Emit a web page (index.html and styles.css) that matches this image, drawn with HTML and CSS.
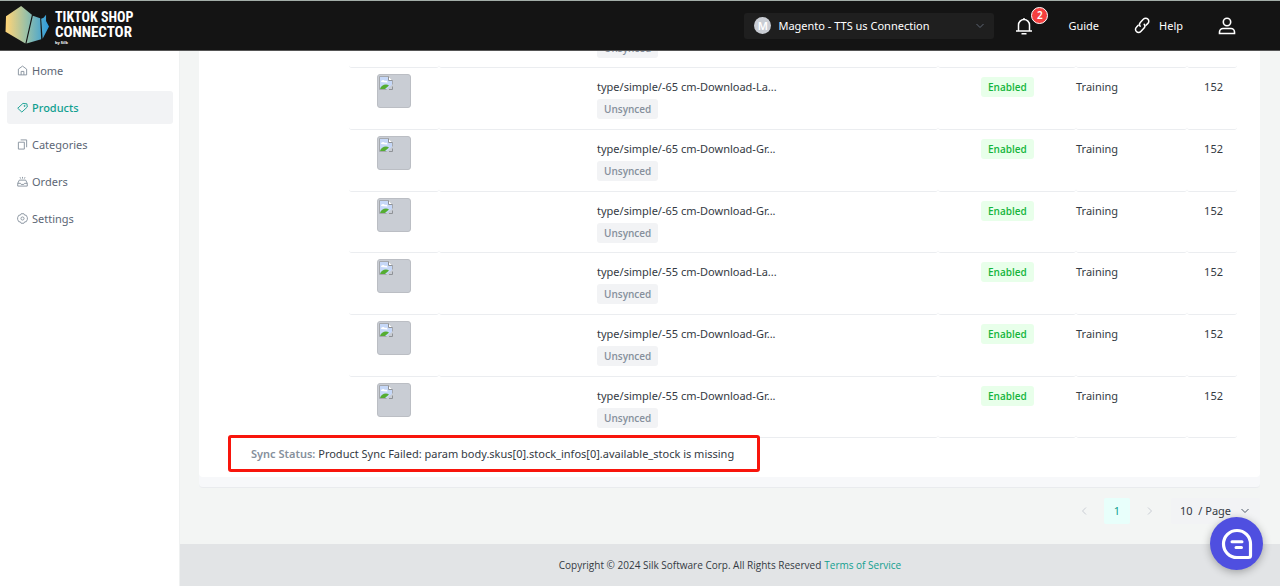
FILE: index.html
```html
<!DOCTYPE html>
<html lang="en">
<head>
<meta charset="utf-8">
<meta name="viewport" content="width=device-width, initial-scale=1">
<title>TikTok Shop Connector - Products</title>
<link rel="stylesheet" href="styles.css">
</head>
<body>
<svg class="defs" aria-hidden="true">
  <symbol id="broken" viewBox="0 0 14 14">
    <path d="M.5.5h9l4 4v9H.5z" fill="#c6d8f8" stroke="#a5a8ad"/>
    <path d="M9.500.5v4h4" fill="#fff" stroke="#8f9297"/>
    <path d="M2 6c0-2 2.500-3 4-1 1.500-.5 2.500.3 2.500 1.500z" fill="#fff"/>
    <path d="M1 13c1-4 6-5.500 9-3.500L6 13z" fill="#55ad32"/>
    <path d="M7 14l7-6v6z" fill="#c9cdd4"/>
    <path d="M10 13.500h3.500v-3" fill="none" stroke="#8f9297"/>
  </symbol>
</svg>

<header class="topbar">
  <a class="brand" href="#" aria-label="TikTok Shop Connector by Silk">
    <svg class="brand-mark" viewBox="0 0 46 42" aria-hidden="true">
      <defs><linearGradient id="silk" gradientUnits="userSpaceOnUse" x1="1" y1="20" x2="45" y2="20"><stop offset="0" stop-color="#ffd477"/><stop offset=".5" stop-color="#94bfa9"/><stop offset="1" stop-color="#2b9be0"/></linearGradient></defs>
      <path d="M16.500 1 1 11.500.5 27.500 20.800 39.500 27.500 10z" fill="url(#silk)"/>
      <path d="M28.500 11 36 13.500 37 35 22 39.500z" fill="url(#silk)"/>
      <path d="M37 14 39.500 13 42 10v6.500L45 22l-6.500 12.500z" fill="url(#silk)"/>
    </svg>
    <span class="brand-text"><span class="brand-line">TIKTOK SHOP</span><span class="brand-line brand-line-wide">CONNECTOR</span><small class="brand-by">by Silk</small></span>
  </a>
  <div class="tools">
    <div class="connection">
      <span class="avatar" aria-hidden="true">M</span>
      <select class="connection-select" aria-label="Connection"><option>Magento - TTS us Connection</option></select>
      <svg class="connection-arrow" viewBox="0 0 10 6" aria-hidden="true"><path d="m1.500 1 3.500 3.500L8.500 1" fill="none" stroke="#5d6573"/></svg>
    </div>
    <button class="bell" type="button" aria-label="Notifications">
      <svg width="18" height="18" viewBox="0 0 18 18" fill="none" stroke="#fff" stroke-width="1.500" aria-hidden="true"><path d="M3.500 14V8a5.500 5.500 0 0 1 11 0v6M1 14h16M9 2.500V1M6.500 16.700h5"/></svg>
      <span class="count">2</span>
    </button>
    <a class="tool guide" href="#">Guide</a>
    <a class="tool help" href="#"><svg width="17" height="17" viewBox="0 0 17 17" fill="none" stroke="#fff" stroke-width="1.500" stroke-linecap="round" aria-hidden="true"><path d="M6.200 9.200C5 7.800 5.200 6.600 6.300 5.400L9.500 2.100a3 3 0 0 1 4.400 0 3 3 0 0 1 0 4.300L12 8.300"/><path d="M10.200 7.200c1.200 1.400 1 2.600-.1 3.800l-3.300 3.500a3 3 0 0 1-4.400 0 3 3 0 0 1 0-4.300L4.200 8.300"/></svg>Help</a>
    <button class="user" type="button" aria-label="Account"><svg width="18" height="18" viewBox="0 0 18 18" fill="none" stroke="#fff" stroke-width="1.600" aria-hidden="true"><circle cx="9" cy="5" r="3.700"/><path d="M1.500 16.500v-1.500a3.500 3.500 0 0 1 3.500-3.500h8a3.500 3.500 0 0 1 3.500 3.500v1.500z"/></svg></button>
  </div>
</header>

<div class="shell">
  <nav class="sidebar" aria-label="Main">
    <a class="nav-item" href="#"><svg class="nav-icon" viewBox="0 0 12 12" aria-hidden="true"><path d="M1.500 4.500 6 1.200l4.500 3.300v6.300h-9zM4.500 10.800V7h3v3.800"/></svg>Home</a>
    <a class="nav-item active" href="#" aria-current="page"><svg class="nav-icon" viewBox="0 0 12 12" aria-hidden="true"><path d="M6.500 1.500 10.800 2 11.200 5.500 5.300 11 .8 6.800z"/><circle cx="8.300" cy="4.300" r=".6"/></svg>Products</a>
    <a class="nav-item" href="#"><svg class="nav-icon" viewBox="0 0 12 12" aria-hidden="true"><path d="M1.500 3.500h6.500v7.500H1.500zM4 1h6.500v8"/></svg>Categories</a>
    <a class="nav-item" href="#"><svg class="nav-icon" viewBox="0 0 12 12" aria-hidden="true"><path d="M.8 11V8l1.700-3.500h7L11.200 8v3zM.8 8h3l.8 1.200h2.800L8.200 8h3M6 1v1.800M3.300 1.300l.6 1.500M8.700 1.300l-.6 1.500"/></svg>Orders</a>
    <a class="nav-item" href="#"><svg class="nav-icon" viewBox="0 0 12 12" aria-hidden="true"><path d="M4.500.8h3l.8 1.500 1.800.2L11.300 5v2l-1.200 2.500-1.800.2-.8 1.500h-3l-.8-1.500-1.800-.2L.7 7V5l1.200-2.500 1.800-.2z"/><circle cx="6" cy="6" r="1.700"/></svg>Settings</a>
  </nav>

  <main class="content">
    <section class="card">
      <div class="card-body">
        <table class="variants" aria-label="Product variants">
          <tbody>
            <tr><td class="c-img"><svg class="thumb" role="img" aria-label="No image"><use href="#broken" x="1" y="1" width="14" height="14"/></svg></td><td class="c-name">type/simple/-65 cm-Download-La...<span class="tag unsynced">Unsynced</span></td><td class="c-state"><span class="tag enabled">Enabled</span></td><td class="c-cat">Training</td><td class="c-qty">152</td></tr>
            <tr><td class="c-img"><svg class="thumb" role="img" aria-label="No image"><use href="#broken" x="1" y="1" width="14" height="14"/></svg></td><td class="c-name">type/simple/-65 cm-Download-La...<span class="tag unsynced">Unsynced</span></td><td class="c-state"><span class="tag enabled">Enabled</span></td><td class="c-cat">Training</td><td class="c-qty">152</td></tr>
            <tr><td class="c-img"><svg class="thumb" role="img" aria-label="No image"><use href="#broken" x="1" y="1" width="14" height="14"/></svg></td><td class="c-name">type/simple/-65 cm-Download-Gr...<span class="tag unsynced">Unsynced</span></td><td class="c-state"><span class="tag enabled">Enabled</span></td><td class="c-cat">Training</td><td class="c-qty">152</td></tr>
            <tr><td class="c-img"><svg class="thumb" role="img" aria-label="No image"><use href="#broken" x="1" y="1" width="14" height="14"/></svg></td><td class="c-name">type/simple/-65 cm-Download-Gr...<span class="tag unsynced">Unsynced</span></td><td class="c-state"><span class="tag enabled">Enabled</span></td><td class="c-cat">Training</td><td class="c-qty">152</td></tr>
            <tr><td class="c-img"><svg class="thumb" role="img" aria-label="No image"><use href="#broken" x="1" y="1" width="14" height="14"/></svg></td><td class="c-name">type/simple/-55 cm-Download-La...<span class="tag unsynced">Unsynced</span></td><td class="c-state"><span class="tag enabled">Enabled</span></td><td class="c-cat">Training</td><td class="c-qty">152</td></tr>
            <tr><td class="c-img"><svg class="thumb" role="img" aria-label="No image"><use href="#broken" x="1" y="1" width="14" height="14"/></svg></td><td class="c-name">type/simple/-55 cm-Download-Gr...<span class="tag unsynced">Unsynced</span></td><td class="c-state"><span class="tag enabled">Enabled</span></td><td class="c-cat">Training</td><td class="c-qty">152</td></tr>
            <tr><td class="c-img"><svg class="thumb" role="img" aria-label="No image"><use href="#broken" x="1" y="1" width="14" height="14"/></svg></td><td class="c-name">type/simple/-55 cm-Download-Gr...<span class="tag unsynced">Unsynced</span></td><td class="c-state"><span class="tag enabled">Enabled</span></td><td class="c-cat">Training</td><td class="c-qty">152</td></tr>
          </tbody>
        </table>
        <p class="status"><span class="status-text"><strong class="status-label">Sync Status:</strong> Product Sync Failed: param body.skus[0].stock_infos[0].available_stock is missing</span></p>
      </div>
    </section>

    <nav class="pager" aria-label="Pagination">
      <button class="page-btn" type="button" aria-label="Previous page" disabled><svg width="8" height="10" viewBox="0 0 8 10" fill="none" stroke="#c9cdd4" aria-hidden="true"><path d="M6 1.500 2.500 5 6 8.500"/></svg></button>
      <button class="page-btn current" type="button" aria-current="page">1</button>
      <button class="page-btn" type="button" aria-label="Next page" disabled><svg width="8" height="10" viewBox="0 0 8 10" fill="none" stroke="#c9cdd4" aria-hidden="true"><path d="M2 1.500 5.500 5 2 8.500"/></svg></button>
      <div class="size">
        <select class="size-select" aria-label="Items per page"><option>10 &nbsp;/ Page</option></select>
        <svg class="size-arrow" viewBox="0 0 10 6" aria-hidden="true"><path d="m1.500 1 3.500 3.500L8.500 1" fill="none" stroke="#4e5969"/></svg>
      </div>
    </nav>

    <footer class="footer">Copyright © 2024 Silk Software Corp. All Rights Reserved <a class="terms" href="#">Terms of Service</a></footer>
  </main>
</div>

<button class="chat" type="button" aria-label="Open chat"><svg width="32" height="32" viewBox="0 0 32 32" fill="none" stroke="#fff" aria-hidden="true"><path d="M16 2.500A13.500 13.500 0 0 0 16 29.500h11.500a2 2 0 0 0 2-2V16A13.500 13.500 0 0 0 16 2.500z" stroke-width="3.200"/><path d="M11 13.800h10M15 19.600h5.500" stroke-width="3" stroke-linecap="round"/></svg></button>
</body>
</html>
```
FILE: styles.css
```css
* { box-sizing: border-box; }

body {
  margin: 0;
  height: 100vh;
  display: flex;
  flex-direction: column;
  overflow: hidden;
  background: #f3f5f4;
  color: #343a43;
  font: 11px/20px "Noto Sans", "Open Sans", sans-serif;
}

button, select { font: inherit; border: 0; padding: 0; }
button { background: none; }
select { appearance: none; }
a { color: inherit; text-decoration: none; }
svg { display: block; }
.defs { position: absolute; width: 0; height: 0; }

.topbar {
  flex: none;
  z-index: 2;
  height: 51px;
  display: flex;
  align-items: center;
  justify-content: space-between;
  padding: 0 44px 0 5px;
  background: #141414;
  border-top: 1px solid #a3ada8;
  border-bottom: 1px solid #555;
  color: #fff;
}

.brand { display: flex; align-items: center; gap: 5px; }
.brand-mark { width: 45px; height: 41px; }
.brand-text {
  display: flex;
  flex-direction: column;
  font-family: "Liberation Sans Narrow", "Roboto Condensed", "Liberation Sans", sans-serif;
  font-weight: 700;
  font-size: 14px;
  line-height: 15px;
  padding-top: 5px;
}
.brand-line { white-space: nowrap; }
.brand-line-wide { font-size: 15px; }
.brand-by { font: 700 4px/6px "Open Sans", sans-serif; }

.tools { display: flex; align-items: center; }
.connection { position: relative; width: 250px; margin-right: 21px; }
.connection-select {
  width: 100%;
  height: 26px;
  padding: 0 30px 0 34px;
  background: #1f1f1f;
  border-radius: 3px;
  color: #fff;
}
.avatar {
  position: absolute;
  left: 10px;
  top: 4px;
  width: 17px;
  height: 17px;
  border-radius: 50%;
  background: #c9cdd4;
  color: #fff;
  font-weight: 600;
  line-height: 17px;
  text-align: center;
}
.connection-arrow { position: absolute; right: 9px; top: 10px; width: 10px; height: 6px; }
.bell { position: relative; margin-right: 35px; }
.count {
  position: absolute;
  left: 16px;
  top: -10px;
  width: 17px;
  height: 17px;
  border: 1px solid #fff;
  border-radius: 50%;
  background: #f53f3f;
  color: #fff;
  font-size: 10px;
  font-weight: 600;
  line-height: 15px;
  text-align: center;
}
.guide { margin-right: 35px; }
.help { display: flex; align-items: center; gap: 8px; margin-right: 35px; }

.shell { flex: 1; min-height: 0; display: flex; }
.sidebar {
  flex: none;
  width: 180px;
  padding: 3px 6px 3px 7px;
  display: flex;
  flex-direction: column;
  gap: 4px;
  background: #fff;
  border-right: 1px solid #eff1f1;
}
.nav-item {
  display: flex;
  align-items: center;
  gap: 4px;
  height: 33px;
  padding: 0 10px;
  border-radius: 3px;
  color: #5c6675;
}
.nav-icon { width: 11px; height: 11px; fill: none; stroke: #86909c; }
.active { background: #f2f3f5; color: #119f90; font-weight: 500; }
.active .nav-icon { stroke: #119f90; }

/* The view rests at the end of its scroll range. */
.content {
  flex: 1;
  min-width: 0;
  display: flex;
  flex-direction: column;
  justify-content: flex-end;
  overflow: hidden;
}
.card {
  flex: none;
  margin: 0 20px 0 19px;
  padding-bottom: 10px;
  background: #f7f8fa;
  border-bottom: 1px solid #e9ebee;
  border-radius: 4px;
}
.card-body { padding-left: 150px; padding-right: 23px; background: #fff; border-radius: 4px; }

.variants { width: 100%; table-layout: fixed; border-collapse: separate; border-spacing: 0; }
.variants tr { height: 62px; }
.variants tr:nth-child(3n+1) { height: 61px; }
.variants td { padding: 9px 0 0; vertical-align: top; border-bottom: 1px solid #ebedf0; border-radius: 3px; }
.variants .c-img { width: 90px; padding: 6px 0 0 28px; }
.variants .c-name { padding-left: 158px; }
.variants .c-state { width: 138px; padding-left: 43px; }
.variants .c-cat { width: 111px; }
.variants .c-qty { width: 50px; padding-right: 14px; text-align: right; }

.thumb { width: 34px; height: 34px; background: #c9cdd4; border: 1px solid #bbbec4; border-radius: 3px; }
.tag {
  display: block;
  width: fit-content;
  padding: 0 7px;
  border-radius: 3px;
  font-family: "Open Sans", "Noto Sans", sans-serif;
  font-size: 10px;
  font-weight: 600;
}
.unsynced { margin-top: 2px; background: #f2f3f5; color: #86909c; }
.enabled { background: #e8ffea; color: #14b53c; }

.status { margin: 0 0 0 -98px; padding: 6px 0 13px; }
.status-text { position: relative; display: inline-block; }
.status-text::after {
  content: "";
  position: absolute;
  inset: -9px -26px -8px -23px;
  border: 3px solid #f8150c;
  border-radius: 3px;
}
.status-label { color: #86909c; font-weight: 600; }

.pager {
  flex: none;
  display: flex;
  justify-content: flex-end;
  gap: 7px;
  padding: 10px 20px 20px;
}
.page-btn { width: 26px; height: 26px; display: grid; place-items: center; border-radius: 2px; }
.current { background: #e8fffb; color: #119f90; }
.size { position: relative; width: 89px; margin-left: 1px; }
.size-select {
  width: 100%;
  height: 26px;
  padding-left: 9px;
  background: #f2f3f5;
  border-radius: 2px;
  color: #343a43;
}
.size-arrow { position: absolute; right: 10px; top: 10px; width: 10px; height: 6px; }

.footer {
  flex: none;
  height: 42px;
  display: flex;
  align-items: center;
  justify-content: center;
  gap: 3px;
  background: #e2e4e6;
  font-family: "Open Sans", "Noto Sans", sans-serif;
  font-size: 10px;
}
.terms { color: #119f90; }

.chat {
  position: fixed;
  right: 17px;
  bottom: 16px;
  z-index: 3;
  width: 53px;
  height: 53px;
  display: grid;
  place-items: center;
  border-radius: 50%;
  background: #4f4fe0;
  box-shadow: 0 2px 8px rgba(0, 0, 0, .3);
}
```
